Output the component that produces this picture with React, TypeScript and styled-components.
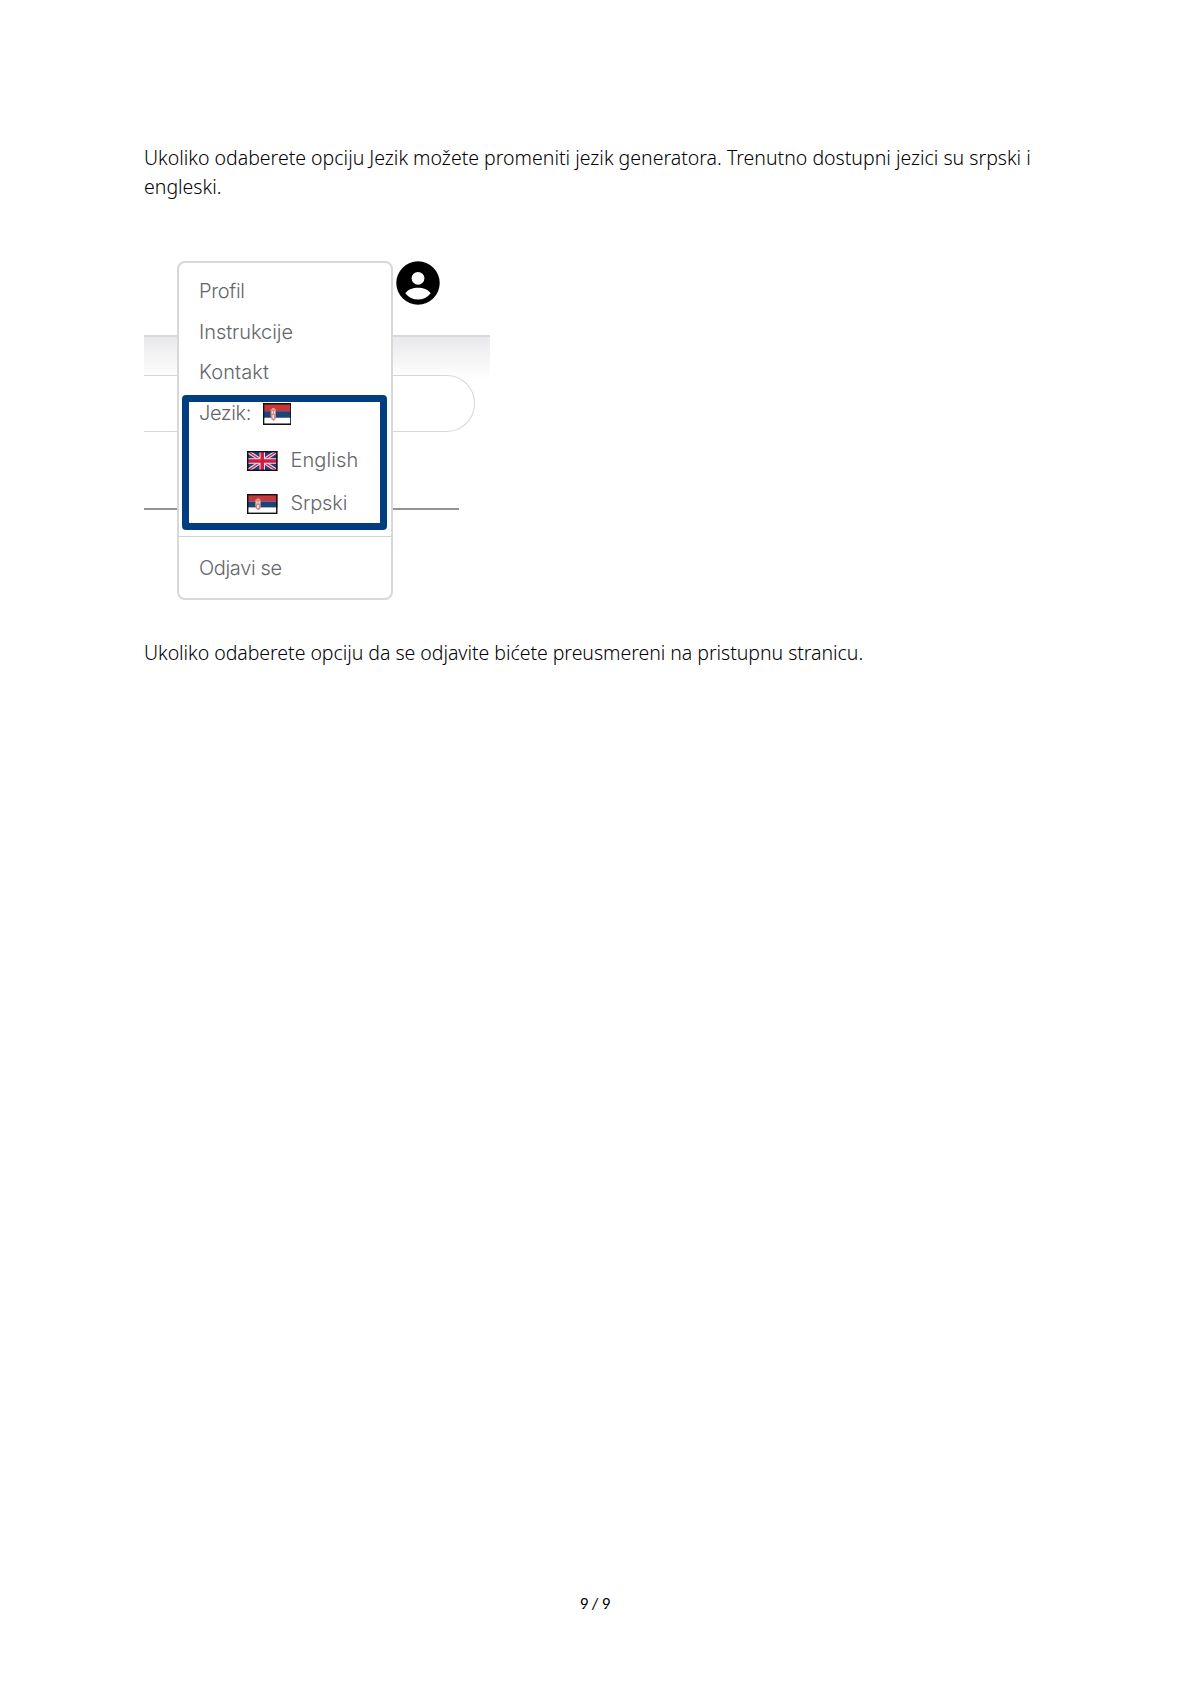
import React from 'react';
import styled, { createGlobalStyle } from 'styled-components';

const GlobalStyle = createGlobalStyle`
  * { box-sizing: border-box; }
  body { margin: 0; background: #fff; }
`;

const Page = styled.main`
  display: flex;
  flex-direction: column;
  width: 1190px;
  height: 1684px;
  padding: 143px 140px 68px 144px;
  background: #fff;
`;

const Paragraph = styled.p<{ $spacing?: number }>`
  margin: 0;
  font: 300 19.5px/29px 'Noto Sans', sans-serif;
  letter-spacing: ${p => p.$spacing ?? 0}px;
  color: #000;
`;

const Figure = styled.section`
  position: relative;
  width: 346px;
  height: 351px;
  margin: 50px 0 36px;
`;

const Header = styled.div`
  display: flex;
  height: 83.5px;
  padding: 10px 0 0 251.5px;
`;

const Band = styled.div`
  height: 125px;
  border-top: 2px solid #d9d9dd;
  background: linear-gradient(#e9e9ec, #fff 42px);
`;

const SearchField = styled.div`
  position: relative;
  top: 38px;
  width: 331px;
  height: 57px;
  border: 1px solid #d6d6d6;
  border-left: 0;
  border-radius: 0 28px 28px 0;
  background: #fff;
`;

const Rule = styled.div`
  width: 315px;
  height: 2px;
  margin-top: 48px;
  background: #929292;
`;

const Menu = styled.nav`
  position: absolute;
  left: 33px;
  top: 10px;
  width: 216px;
  height: 339px;
  padding-top: 8.3px;
  border: 2px solid #d8d8d8;
  border-radius: 8px;
  background: #fff;
`;

const Item = styled.div<{ $indent?: boolean; $spacing?: number }>`
  display: flex;
  align-items: center;
  height: ${p => (p.$indent ? 43 : 40.5)}px;
  padding-left: ${p => (p.$indent ? 68 : 20)}px;
  font: 300 20px/${p => (p.$indent ? 43 : 40.5)}px Inter, sans-serif;
  font-variant-ligatures: none;
  letter-spacing: ${p => p.$spacing ?? 0}px;
  color: #63666a;
`;

const Languages = styled.div`
  padding-top: 5.6px;
`;

const Divider = styled.div`
  height: 1px;
  margin: 11px 0 11px;
  background: #d2d2d2;
`;

const Highlight = styled.div`
  position: absolute;
  left: 37.5px;
  top: 144px;
  width: 205.5px;
  height: 135px;
  border: 7px solid #003e80;
  border-radius: 4px;
`;

const FlagSvg = styled.svg<{ $gap: number; $before?: number }>`
  flex: none;
  margin: 2px ${p => p.$gap}px 0 ${p => p.$before ?? 0}px;
`;

const PageNumber = styled.footer`
  margin-top: auto;
  padding-right: 4px;
  text-align: center;
  font: 400 17px/24px Carlito, 'Noto Sans', sans-serif;
  letter-spacing: -0.2px;
  color: #000;
`;

interface FlagProps { w: number; h: number; gap: number; before?: number }

function SerbianFlag({ w, h, gap, before }: FlagProps) {
  return (
    <FlagSvg $gap={gap} $before={before} width={w} height={h} viewBox="0 0 30 20" preserveAspectRatio="none">
      <rect width="30" height="20" fill="#fff" />
      <rect width="30" height="7.4" fill="#c8363c" />
      <rect y="7.4" width="30" height="6" fill="#1c4478" />
      <path d="M8 5.5h5.6v6.500l-.6 2.800-1.800 1.500L9 14.800l-1-3z" fill="#d08c86" />
      <path d="M9.200 7.500h1.200v2H9.200zM11.500 7.500h1.200v2h-1.200zM10 11h1.600v3H10z" fill="#f5ece8" />
      <path d="M9.300 4.600h3v1.400h-3z" fill="#dfa878" />
      <rect x=".7" y=".7" width="28.600" height="18.600" fill="none" stroke="#111" strokeWidth="1.400" />
    </FlagSvg>
  );
}

function BritishFlag({ w, h, gap, before }: FlagProps) {
  return (
    <FlagSvg $gap={gap} $before={before} width={w} height={h} viewBox="0 0 30 20" preserveAspectRatio="none">
      <rect width="30" height="20" fill="#253a7c" />
      <path d="M0 0l30 20M30 0L0 20" stroke="#e4dcea" strokeWidth="3.600" />
      <path d="M0 0l30 20M30 0L0 20" stroke="#d22e4e" strokeWidth="1.400" />
      <path d="M15 0v20M0 10h30" stroke="#ecdfe8" strokeWidth="5.400" />
      <path d="M15 0v20M0 10h30" stroke="#d01c40" strokeWidth="3.400" />
      <rect x=".7" y=".7" width="28.600" height="18.600" fill="none" stroke="#111" strokeWidth="1.400" />
    </FlagSvg>
  );
}

function Avatar() {
  return (
    <svg width="44" height="44" viewBox="0 0 44 44">
      <circle cx="22" cy="22" r="21.700" fill="#000" />
      <circle cx="22" cy="17.300" r="6.400" fill="#fff" />
      <path d="M9.300 32.300C12 28.500 17 26.800 22 26.800s10 1.700 12.700 5.500C31.500 36.500 27 38.600 22 38.600S12.500 36.500 9.300 32.300z" fill="#fff" />
    </svg>
  );
}

export default function App() {
  return (
    <Page>
      <GlobalStyle />
      <Paragraph>
        Ukoliko odaberete opciju Jezik možete promeniti jezik generatora. Trenutno dostupni jezici su srpski i<br />
        engleski.
      </Paragraph>
      <Figure>
        <Header><Avatar /></Header>
        <Band><SearchField /></Band>
        <Rule />
        <Menu>
          <Item $spacing={-0.3}>Profil</Item>
          <Item $spacing={-0.05}>Instrukcije</Item>
          <Item $spacing={0.1}>Kontakt</Item>
          <Item $spacing={-0.4}>Jezik:<SerbianFlag w={28.5} h={22} gap={0} before={12} /></Item>
          <Languages>
            <Item $indent $spacing={0.1}><BritishFlag w={30.5} h={20} gap={13} />English</Item>
            <Item $indent $spacing={-0.15}><SerbianFlag w={30.5} h={20} gap={13} />Srpski</Item>
          </Languages>
          <Divider />
          <Item $spacing={-0.35}>Odjavi se</Item>
        </Menu>
        <Highlight />
      </Figure>
      <Paragraph $spacing={-0.04}>Ukoliko odaberete opciju da se odjavite bićete preusmereni na pristupnu stranicu.</Paragraph>
      <PageNumber>9 / 9</PageNumber>
    </Page>
  );
}
